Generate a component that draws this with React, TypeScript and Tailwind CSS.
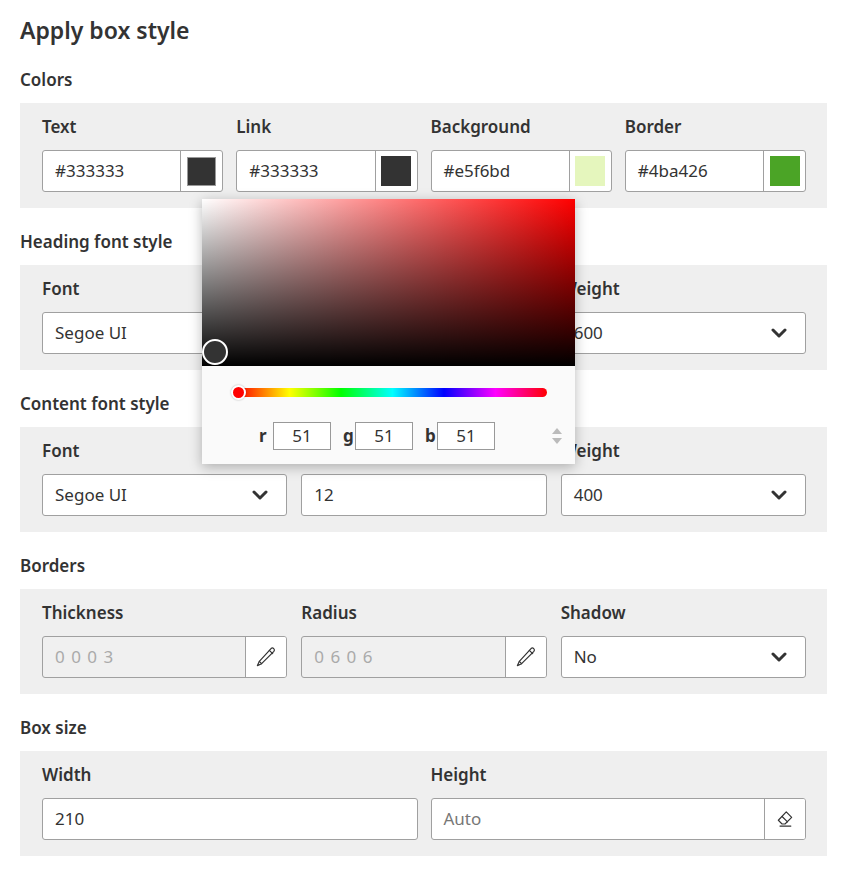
import React from "react";

const font = { fontFamily: '"Segoe UI", "Noto Sans", sans-serif' };

function Chevron() {
  return (
    <svg width="16" height="10" viewBox="0 0 16 10" className="shrink-0">
      <polyline points="2,2 8,8 14,2" fill="none" stroke="#333" strokeWidth="3" strokeLinecap="round" strokeLinejoin="round" />
    </svg>
  );
}

function PencilIcon() {
  return (
    <svg width="22" height="22" viewBox="0 0 24 24" fill="none" stroke="#333" strokeWidth="1.3" strokeLinejoin="round" strokeLinecap="round">
      <path d="M17.5 2.8a2.2 2.2 0 0 1 3.1 3.1L7.2 19.3 2.6 21.4l2.1-4.6z" />
      <path d="M15.6 4.7l3.7 3.7" />
      <path d="M4.7 16.8l2.5 2.5" />
    </svg>
  );
}

function EraserIcon() {
  return (
    <svg width="20" height="20" viewBox="0 0 24 24" fill="none" stroke="#333" strokeWidth="1.4" strokeLinejoin="round" strokeLinecap="round">
      <path d="M13.5 3.5l6.5 6.5-8 8H8.5L4 13.5z" />
      <path d="M8.5 9l6.5 6.5" />
      <path d="M6 20.5h13" />
    </svg>
  );
}

function Label({ children }: { children: React.ReactNode }) {
  return <div className="h-6 leading-6 mb-[11px] text-[17px] font-semibold text-[#333] whitespace-nowrap">{children}</div>;
}

function ColorField({ label, value, swatch, bordered }: { label: string; value: string; swatch: string; bordered?: boolean }) {
  return (
    <div>
      <Label>{label}</Label>
      <div className="flex h-[42px] bg-white border border-[#a0a0a0] rounded-[3px]">
        <div className="flex-1 flex items-center pl-3 text-[17px] text-[#333]">{value}</div>
        <div className="w-[42px] border-l border-[#a0a0a0] flex items-center justify-center">
          <div
            className={bordered ? "w-[29px] h-[29px] border border-[#999]" : "w-[30px] h-[30px]"}
            style={{ backgroundColor: swatch }}
          />
        </div>
      </div>
    </div>
  );
}

function SelectField({ label, value }: { label: string; value: string }) {
  return (
    <div>
      <Label>{label}</Label>
      <div className="flex items-center justify-between h-[42px] bg-white border border-[#a0a0a0] rounded-[3px] pl-3 pr-[18px] text-[17px] text-[#333]">
        <span>{value}</span>
        <Chevron />
      </div>
    </div>
  );
}

function TextField({ label, value }: { label: string; value: string }) {
  return (
    <div>
      <Label>{label || "\u00a0"}</Label>
      <div className="flex items-center h-[42px] bg-white border border-[#a0a0a0] rounded-[3px] pl-3 text-[17px] text-[#333]">{value}</div>
    </div>
  );
}

function ButtonField({ label, value, icon, disabled }: { label: string; value: string; icon: React.ReactNode; disabled?: boolean }) {
  return (
    <div>
      <Label>{label}</Label>
      <div className={`flex h-[42px] border border-[#a0a0a0] rounded-[3px] overflow-hidden ${disabled ? "bg-[#f0f0f0]" : "bg-white"}`}>
        <div className={`flex-1 flex items-center pl-3 text-[17px] ${disabled ? "text-[#aaa] tracking-[1px]" : "text-[#777]"}`}>{value}</div>
        <div className="w-[41px] bg-white border-l border-[#a0a0a0] flex items-center justify-center">{icon}</div>
      </div>
    </div>
  );
}

function Section({ title, cols, children }: { title: string; cols: string; children: React.ReactNode }) {
  return (
    <section className="mt-[22px] first:mt-0">
      <Label>{title}</Label>
      <div className={`bg-[#efefef] pt-3 pb-4 pl-[22px] pr-[21px] grid ${cols}`}>{children}</div>
    </section>
  );
}

function ColorPicker() {
  return (
    <div className="absolute left-[202px] top-[199px] w-[373px] bg-[#fafafa] shadow-[0_3px_12px_rgba(0,0,0,0.28)]">
      <div className="relative h-[167px] bg-[linear-gradient(to_right,#fff,#f00)]">
        <div className="absolute inset-0 bg-[linear-gradient(to_top,#000,rgba(0,0,0,0))]" />
        <div className="absolute left-0 top-[140px] w-[26px] h-[26px] rounded-full border-2 border-white bg-[#333]" />
      </div>
      <div className="h-[98px] pt-[22px]">
        <div className="relative ml-[36px] mr-[28px] h-[9px] rounded-full bg-[linear-gradient(to_right,#f00,#ff0,#0f0,#0ff,#00f,#f0f,#f00)]">
          <div className="absolute -left-[7px] -top-[3px] w-[15px] h-[15px] rounded-full bg-[#f00] border-2 border-white shadow-[0_0_2px_rgba(0,0,0,0.3)]" />
        </div>
        <div className="flex items-center mt-[25px] pl-[57px] text-[17px] text-[#333]">
          <span className="font-bold w-[14px]">r</span>
          <div className="w-[58px] h-[28px] border border-[#999] bg-white flex items-center justify-center">51</div>
          <span className="font-bold ml-[12px] w-[12px]">g</span>
          <div className="w-[58px] h-[28px] border border-[#999] bg-white flex items-center justify-center">51</div>
          <span className="font-bold ml-[12px] w-[12px]">b</span>
          <div className="w-[58px] h-[28px] border border-[#999] bg-white flex items-center justify-center">51</div>
          <svg width="12" height="18" viewBox="0 0 12 18" className="ml-[56px]">
            <polygon points="6,1 11,7 1,7" fill="#bbb" />
            <polygon points="1,11 11,11 6,17" fill="#bbb" />
          </svg>
        </div>
      </div>
    </div>
  );
}

export default function App() {
  return (
    <div className="relative w-[848px] min-h-[869px] bg-white pl-5 pr-[21px] pt-[14px]" style={font}>
      <h1 className="h-8 leading-8 text-[23px] font-semibold text-[#333] mb-5">Apply box style</h1>

      <Section title="Colors" cols="grid-cols-4 gap-x-[13px]">
        <ColorField label="Text" value="#333333" swatch="#333333" bordered />
        <ColorField label="Link" value="#333333" swatch="#333333" />
        <ColorField label="Background" value="#e5f6bd" swatch="#e5f6bd" />
        <ColorField label="Border" value="#4ba426" swatch="#4ba426" />
      </Section>

      <Section title="Heading font style" cols="grid-cols-3 gap-x-[14px]">
        <SelectField label="Font" value="Segoe UI" />
        <TextField label="" value="" />
        <SelectField label="Weight" value="600" />
      </Section>

      <Section title="Content font style" cols="grid-cols-3 gap-x-[14px]">
        <SelectField label="Font" value="Segoe UI" />
        <TextField label="" value="12" />
        <SelectField label="Weight" value="400" />
      </Section>

      <Section title="Borders" cols="grid-cols-3 gap-x-[14px]">
        <ButtonField label="Thickness" value="0 0 0 3" icon={<PencilIcon />} disabled />
        <ButtonField label="Radius" value="0 6 0 6" icon={<PencilIcon />} disabled />
        <SelectField label="Shadow" value="No" />
      </Section>

      <Section title="Box size" cols="grid-cols-2 gap-x-[13px]">
        <TextField label="Width" value="210" />
        <ButtonField label="Height" value="Auto" icon={<EraserIcon />} />
      </Section>

      <ColorPicker />
    </div>
  );
}
